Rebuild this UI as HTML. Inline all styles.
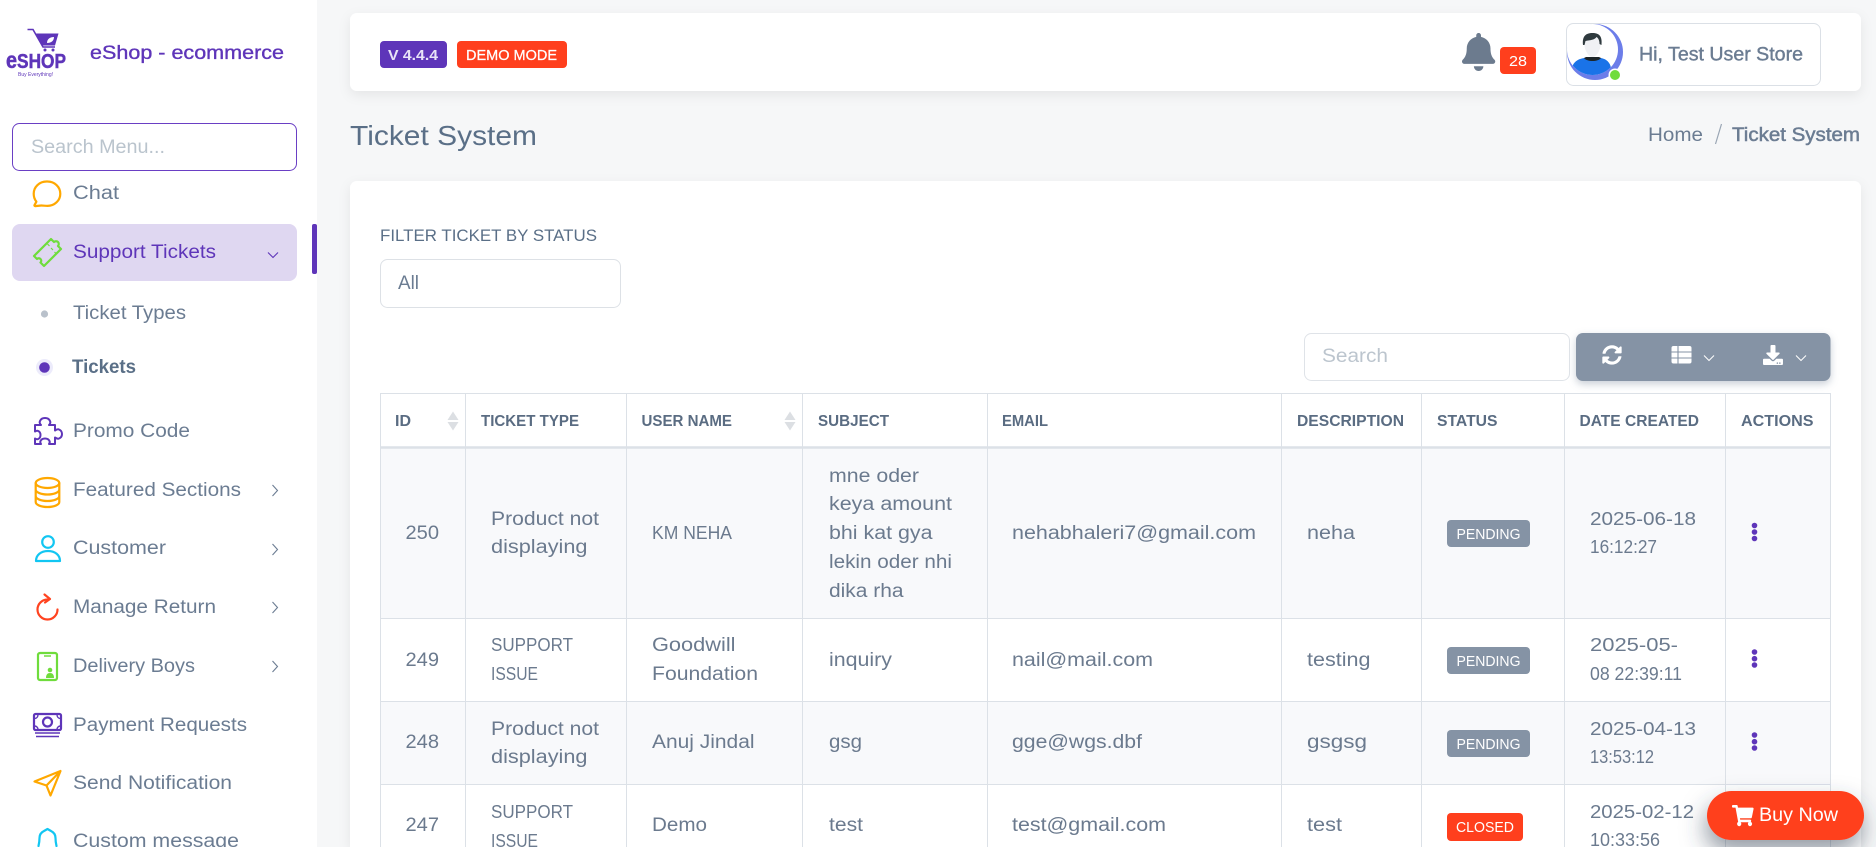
<!DOCTYPE html>
<html lang="en"><head><meta charset="utf-8"><title>Ticket System</title>
<style>
html,body{margin:0;padding:0;width:1876px;height:847px;overflow:hidden;background:#f6f7f8}
svg{display:block;position:absolute;left:0;top:0}
text{font-family:"Liberation Sans",sans-serif;white-space:pre}
.n{font-size:19px;fill:#6b7c92}
.b{font-size:19px;fill:#6b7a8e}
.c{font-size:18px;fill:#6b7a8e}
.h{font-size:16px;font-weight:bold;fill:#5a6c82}
.ic{fill:none;stroke-width:2.2;stroke-linecap:round;stroke-linejoin:round}
.ln{stroke:#dce1e7;stroke-width:1;fill:none}
</style></head><body>
<svg width="1876" height="847" viewBox="0 0 1876 847" xmlns="http://www.w3.org/2000/svg">
<defs>
<filter id="sh" x="-5%" y="-30%" width="110%" height="170%"><feDropShadow dx="0" dy="4" stdDeviation="6" flood-color="#000" flood-opacity=".07"/></filter>
<filter id="sh2" x="-30%" y="-50%" width="160%" height="260%"><feDropShadow dx="-2" dy="12" stdDeviation="12" flood-color="#3a4658" flood-opacity=".55"/></filter>
<filter id="sh3" x="-5%" y="-20%" width="110%" height="160%"><feDropShadow dx="0" dy="3" stdDeviation="4" flood-color="#8593a5" flood-opacity=".45"/></filter>
<clipPath id="av"><circle cx="1592.5" cy="49.5" r="25.5"/></clipPath>
</defs>

<!-- sidebar -->
<rect x="0" y="0" width="317" height="847" fill="#fff"/>
<rect x="312" y="224" width="5" height="50" rx="2" fill="#5e35b9"/>
<!-- logo -->
<path d="M27.5 29.5h5.5l10 17.500h12" fill="none" stroke="#5e35b9" stroke-width="1.6"/>
<path d="M36 33.500h22.500l-3.500 12h-13z" fill="#5e35b9"/>
<path d="M47 43c0-4 3-6 7-6 0 4-3 6-7 6z" fill="#fff"/>
<circle cx="45" cy="50" r="1.500" fill="#5e35b9"/><circle cx="53" cy="50" r="1.500" fill="#5e35b9"/>
<text x="6" y="68" textLength="60" lengthAdjust="spacingAndGlyphs" font-weight="bold" fill="#5e35b9" stroke="#5e35b9" stroke-width=".5"><tspan font-size="23">e</tspan><tspan font-size="20">SHOP</tspan></text>
<text x="18" y="76" textLength="35" lengthAdjust="spacingAndGlyphs" font-size="5" fill="#5e35b9">Buy Everything!</text>
<text x="90" y="59" textLength="194" lengthAdjust="spacingAndGlyphs" font-size="19" fill="#5e35b9" stroke="#5e35b9" stroke-width=".35">eShop - ecommerce</text>

<!-- search menu -->
<rect x="12.5" y="123.5" width="284" height="47" rx="7" fill="#fff" stroke="#6a3fc4" stroke-width="1"/>
<text x="31" y="153" textLength="134" lengthAdjust="spacingAndGlyphs" font-size="19" fill="#bac4cd">Search Menu...</text>

<!-- chat -->
<path class="ic" stroke="#ffa800" d="M47.5 181.5c7 0 12.8 5.4 12.8 12.2s-5.800 12.200-12.800 12.200c-3 0-5 -.6-7.500-.3l-4.800.5c-.8 0-1-.6-.6-1.200l1.800-3.200c-1.800-2.300-2.700-5-2.700-8 0-6.800 5.800-12.200 12.800-12.200z"/>
<text class="n" x="73" y="199" textLength="46" lengthAdjust="spacingAndGlyphs">Chat</text>

<!-- support -->
<rect x="12" y="224" width="285" height="57" rx="8" fill="#dfd7f1"/>
<path class="ic" stroke="#6fdc3c" d="M34 256l17-17 3 3c1-1 3-1 4 0s1 3 0 4l3 3-17 17-3.500-3.500c1-1 1-2.500 0-3.500s-2.500-1-3.500 0z"/>
<path d="M47.500 244l2 2m1.500 2l2 2m1.500 2l1.500 1.500" stroke="#6fdc3c" stroke-width="1.200" fill="none"/>
<text x="73" y="258" textLength="143" lengthAdjust="spacingAndGlyphs" font-size="19" fill="#5e35b9">Support Tickets</text>
<path d="M268 252.500l5 5 5-5" fill="none" stroke="#5e35b9" stroke-width="1.100"/>

<!-- sub -->
<circle cx="44.500" cy="314" r="3.600" fill="#b9c1cb"/>
<text class="n" x="73" y="319" textLength="113" lengthAdjust="spacingAndGlyphs">Ticket Types</text>
<circle cx="44.500" cy="367.500" r="8.500" fill="#ecebfb"/><circle cx="44.500" cy="367.500" r="5.300" fill="#5e35b9"/>
<text x="72" y="373" textLength="64" lengthAdjust="spacingAndGlyphs" font-size="19" font-weight="bold" fill="#5a6f87">Tickets</text>

<!-- promo -->
<path stroke="#5e35b9" fill="none" stroke-width="2" stroke-linejoin="round" d="M35 425h6c-1.500-1.500-1.500-3-1-4 .8-2 3-3 5-3s4.200 1 5 3c.5 1 .5 2.500-1 4h6v5.500c1.500-1 3-1.500 4-1 2 .8 3 2.500 3 4.500s-1 3.700-3 4.500c-1 .5-2.500 0-4-1V444h-6c.7-1 1-2 .5-3-.7-1.500-2.500-2.500-4.500-2.500s-3.800 1-4.500 2.500c-.5 1-.2 2 .5 3H35v-5.500c1.200.7 2.200 1 3.200.5 1.500-.7 2.300-2.300 2.300-4s-.8-3.300-2.300-4c-1-.5-2-.2-3.200.5z"/>
<text class="n" x="73" y="437" textLength="117" lengthAdjust="spacingAndGlyphs">Promo Code</text>

<!-- featured -->
<g class="ic" stroke="#ffa800"><ellipse cx="47.500" cy="483" rx="11.800" ry="5"/><path d="M35.700 483v19c0 2.800 5.300 5 11.800 5s11.800-2.200 11.800-5v-19M35.700 489.500c0 2.800 5.300 5 11.800 5s11.800-2.200 11.800-5M35.700 496c0 2.800 5.300 5 11.800 5s11.800-2.200 11.800-5"/></g>
<text class="n" x="73" y="496" textLength="168" lengthAdjust="spacingAndGlyphs">Featured Sections</text>
<path d="M272.500 485l5 5.500-5 5.500" fill="none" stroke="#6b7c92" stroke-width="1.100"/>

<!-- customer -->
<g class="ic" stroke="#12c6f2"><circle cx="48" cy="542" r="5.800"/><path d="M36 561c0-6 5-10 12-10s12 4 12 10z"/></g>
<text class="n" x="73" y="554" textLength="93" lengthAdjust="spacingAndGlyphs">Customer</text>
<path d="M272.500 544l5 5.500-5 5.500" fill="none" stroke="#6b7c92" stroke-width="1.100"/>

<!-- return -->
<path class="ic" stroke="#ff4320" d="M57.500 609.500A10 10 0 1 1 47.500 599.500M44.500 594.500l5.500 4.500-5 3.500"/>
<text class="n" x="73" y="613" textLength="143" lengthAdjust="spacingAndGlyphs">Manage Return</text>
<path d="M272.500 602l5 5.500-5 5.500" fill="none" stroke="#6b7c92" stroke-width="1.100"/>

<!-- delivery -->
<rect x="38" y="653" width="19" height="27" rx="2" class="ic" stroke="#6fdc3c"/>
<path d="M44 656h7" stroke="#6fdc3c" stroke-width="1.500"/>
<circle cx="50" cy="670" r="2.300" fill="#6fdc3c"/><path d="M46 678c0-3.500 1.500-5 4-5s4 1.500 4 5z" fill="#6fdc3c"/>
<text class="n" x="73" y="672" textLength="122" lengthAdjust="spacingAndGlyphs">Delivery Boys</text>
<path d="M272.500 661l5 5.500-5 5.500" fill="none" stroke="#6b7c92" stroke-width="1.100"/>

<!-- payment -->
<rect x="34" y="714" width="27" height="16" rx="1.500" class="ic" stroke="#5e35b9"/>
<circle cx="47.500" cy="722" r="4.500" class="ic" stroke="#5e35b9"/>
<path d="M34.500 718.500c2 0 3.500-1.500 3.500-4M60.500 718.500c-2 0-3.500-1.500-3.500-4M34.500 726c2 0 3.500 1.500 3.500 3.500M60.500 726c-2 0-3.500 1.500-3.500 3.500" fill="none" stroke="#5e35b9" stroke-width="1.400"/>
<path d="M35 733h25M36 736.500h23" stroke="#5e35b9" stroke-width="1.500"/>
<text class="n" x="73" y="731" textLength="174" lengthAdjust="spacingAndGlyphs">Payment Requests</text>

<!-- send -->
<path class="ic" stroke="#ffa800" d="M60.500 771l-26 10.500 12 4 4 10zM46.500 785.500l14-14.500"/>
<text class="n" x="73" y="789" textLength="159" lengthAdjust="spacingAndGlyphs">Send Notification</text>

<!-- custom -->
<path class="ic" stroke="#12c6f2" d="M38.500 846c.7-3 1-5 1-8 0-4 2.500-6 4.500-7l3.500-2 3.500 2c2 1 4.500 3 4.500 7 0 3 .3 5 1 8"/>
<text class="n" x="73" y="847" textLength="166" lengthAdjust="spacingAndGlyphs">Custom message</text>

<!-- topbar -->
<rect x="350" y="13" width="1511" height="78" rx="7" fill="#fff" filter="url(#sh)"/>
<rect x="380" y="41" width="67" height="27" rx="4" fill="#5e35b9"/>
<text x="388" y="60" textLength="50" lengthAdjust="spacingAndGlyphs" font-size="15" font-weight="bold" fill="#e8e3f7">V 4.4.4</text>
<rect x="457" y="41" width="110" height="27" rx="4" fill="#ff3f1d"/>
<text x="466" y="60" textLength="91" lengthAdjust="spacingAndGlyphs" font-size="15" fill="#fff" stroke="#fff" stroke-width=".25">DEMO MODE</text>

<path transform="translate(1462 33) scale(.0742)" fill="#6c7b8e" d="M224 512c35.32 0 63.97-28.65 63.97-64H160.030c0 35.35 28.65 64 63.97 64zm215.39-149.71c-19.32-20.76-55.47-51.990-55.47-154.290 0-77.700-54.480-139.900-127.940-155.160V32c0-17.670-14.320-32-31.980-32s-31.980 14.330-31.980 32v20.840C118.560 68.100 64.080 130.300 64.080 208c0 102.300-36.150 133.530-55.470 154.290-6 6.450-8.660 14.160-8.610 21.710.11 16.400 12.980 32 32.100 32h383.800c19.120 0 32-15.600 32.100-32 .05-7.550-2.610-15.270-8.610-21.710z"/>
<rect x="1500" y="47" width="36" height="27" rx="4" fill="#ff3f1d"/>
<text x="1509" y="66" textLength="18" lengthAdjust="spacingAndGlyphs" font-size="15" fill="#fff">28</text>

<rect x="1566.500" y="23.500" width="254" height="62" rx="7" fill="#fff" stroke="#dbe0e6" stroke-width="1"/>
<circle cx="1595" cy="52" r="28" fill="#6c7de9"/>
<circle cx="1592.500" cy="49.500" r="25.500" fill="#fff"/>
<g clip-path="url(#av)">
<path d="M1572 80v-12c1-6 6-9 12-10h17c5 1 9 4 10 10v12z" fill="#1a73e8"/>
<path d="M1584 58c3 4 14 4 17 0l-2-1h-13z" fill="#1d2528"/>
<path d="M1584 42c0-6 3-8 8.500-8s8.500 2 8.500 8c0 7-4 15-8.500 15s-8.500-8-8.500-15z" fill="#f0f1f4"/>
<path d="M1583 45c-1-9 3-12 9.500-12s10 3 9 12l-2-1c0-3-1-6-3-7-2 3-6 3-11 4l-1 4z" fill="#2f3a3e"/>
</g>
<circle cx="1615" cy="75" r="6.500" fill="#fff"/><circle cx="1615" cy="75" r="5" fill="#6fdc3c"/>
<text x="1639" y="60.500" textLength="164" lengthAdjust="spacingAndGlyphs" font-size="19" fill="#6b7c92" stroke="#6b7c92" stroke-width=".4">Hi, Test User Store</text>

<!-- title -->
<text x="350" y="145" textLength="187" lengthAdjust="spacingAndGlyphs" font-size="28" fill="#5a6f87">Ticket System</text>
<text x="1648" y="141" textLength="55" lengthAdjust="spacingAndGlyphs" font-size="19" fill="#6b7c92">Home</text>
<path d="M1721.500 124l-6 20" stroke="#9aa6b4" stroke-width="1.200"/>
<text x="1732" y="141" textLength="128" lengthAdjust="spacingAndGlyphs" font-size="19" fill="#6b7c92" stroke="#6b7c92" stroke-width=".5">Ticket System</text>

<!-- card -->
<path d="M350 847V188a7 7 0 0 1 7-7H1854a7 7 0 0 1 7 7V847z" fill="#fff" filter="url(#sh)"/>
<text x="380" y="241" textLength="217" lengthAdjust="spacingAndGlyphs" font-size="17" fill="#5a6f87">FILTER TICKET BY STATUS</text>
<rect x="380.500" y="259.500" width="240" height="48" rx="7" fill="#fff" stroke="#dde1e6" stroke-width="1"/>
<text x="398" y="289" textLength="21" lengthAdjust="spacingAndGlyphs" font-size="19" fill="#6b7c92">All</text>

<rect x="1304.500" y="333.500" width="265" height="47" rx="7" fill="#fff" stroke="#dfe3e8" stroke-width="1"/>
<text x="1322" y="362" textLength="66" lengthAdjust="spacingAndGlyphs" font-size="19" fill="#bcc5ce">Search</text>
<rect x="1576" y="333" width="254.500" height="48" rx="7" fill="#8593a5" filter="url(#sh3)"/>
<path transform="translate(1602 345) scale(.039)" fill="#fff" d="M370.720 133.280C339.458 104.008 298.888 87.962 255.848 88c-77.458.068-144.328 53.178-162.791 126.850-1.344 5.363-6.122 9.150-11.651 9.150H24.103c-7.498 0-13.194-6.807-11.807-14.176C33.933 94.924 134.813 8 256 8c66.448 0 126.791 26.136 171.315 68.685L463.030 40.970C478.149 25.851 504 36.559 504 57.941V192c0 13.255-10.745 24-24 24H345.941c-21.382 0-32.090-25.851-16.971-40.971l41.750-41.749zM32 296h134.059c21.382 0 32.090 25.851 16.971 40.971l-41.750 41.750c31.262 29.273 71.835 45.319 114.876 45.280 77.418-.07 144.315-53.144 162.787-126.849 1.344-5.363 6.122-9.150 11.651-9.150h57.304c7.498 0 13.194 6.807 11.807 14.176C478.067 417.076 377.187 504 256 504c-66.448 0-126.791-26.136-171.315-68.685L48.970 471.030C33.851 486.149 8 475.441 8 454.059V320c0-13.255 10.745-24 24-24z"/>
<rect x="1671.500" y="346" width="20" height="17.500" rx="2" fill="#fff"/>
<path d="M1671 352h21M1671 358h21M1678 346v18" stroke="#8593a5" stroke-width="1.100"/>
<path d="M1704 355.500l5 5 5-5" fill="none" stroke="#fff" stroke-width="1"/>
<path transform="translate(1763 345) scale(.039)" fill="#fff" d="M216 0h80c13.300 0 24 10.700 24 24v168h87.700c17.800 0 26.700 21.500 14.100 34.100L269.700 378.300c-7.500 7.500-19.800 7.500-27.300 0L90.100 226.100c-12.600-12.600-3.700-34.100 14.100-34.100H192V24c0-13.300 10.700-24 24-24zm296 376v112c0 13.300-10.700 24-24 24H24c-13.300 0-24-10.700-24-24V376c0-13.300 10.700-24 24-24h146.700l49 49c20.100 20.100 52.500 20.100 72.600 0l49-49H488c13.300 0 24 10.700 24 24zm-124 88c0-11-9-20-20-20s-20 9-20 20 9 20 20 20 20-9 20-20zm64 0c0-11-9-20-20-20s-20 9-20 20 9 20 20 20 20-9 20-20z"/>
<path d="M1796 355.500l5 5 5-5" fill="none" stroke="#fff" stroke-width="1"/>

<!-- table -->
<rect x="380" y="448" width="1450" height="170" fill="#f8f9fb"/>
<rect x="380" y="701" width="1450" height="83" fill="#f8f9fb"/>
<path class="ln" d="M380 393.500H1830M380 618.500H1830M380 701.500H1830M380 784.500H1830M380.500 393V847M465.500 393V847M626.500 393V847M802.500 393V847M987.500 393V847M1281.500 393V847M1421.500 393V847M1564.500 393V847M1725.500 393V847M1830.500 393V847"/>
<path d="M380 447.500H1830" stroke="#dce1e7" stroke-width="2.500"/>

<text class="h" x="395" y="426" textLength="16" lengthAdjust="spacingAndGlyphs">ID</text>
<path d="M453 411.500l5.500 8.500h-11zM453 430.500l5.500-8.500h-11z" fill="#dcdfe3"/>
<text class="h" x="481" y="426" textLength="98" lengthAdjust="spacingAndGlyphs">TICKET TYPE</text>
<text class="h" x="641.500" y="426" textLength="90.500" lengthAdjust="spacingAndGlyphs">USER NAME</text>
<path d="M790 411.500l5.500 8.500h-11zM790 430.500l5.500-8.500h-11z" fill="#dcdfe3"/>
<text class="h" x="818" y="426" textLength="71" lengthAdjust="spacingAndGlyphs">SUBJECT</text>
<text class="h" x="1002" y="426" textLength="46" lengthAdjust="spacingAndGlyphs">EMAIL</text>
<text class="h" x="1297" y="426" textLength="107" lengthAdjust="spacingAndGlyphs">DESCRIPTION</text>
<text class="h" x="1437" y="426" textLength="60.500" lengthAdjust="spacingAndGlyphs">STATUS</text>
<text class="h" x="1579.500" y="426" textLength="119.500" lengthAdjust="spacingAndGlyphs">DATE CREATED</text>
<text class="h" x="1741" y="426" textLength="72.500" lengthAdjust="spacingAndGlyphs">ACTIONS</text>

<!-- row 1 -->
<text class="b" x="405.500" y="539" textLength="33.500" lengthAdjust="spacingAndGlyphs">250</text>
<text class="b" x="491" y="525" textLength="108" lengthAdjust="spacingAndGlyphs">Product not</text>
<text class="b" x="491" y="553" textLength="96.500" lengthAdjust="spacingAndGlyphs">displaying</text>
<text class="c" x="652" y="539" textLength="80" lengthAdjust="spacingAndGlyphs">KM NEHA</text>
<text class="b" x="829" y="482" textLength="90" lengthAdjust="spacingAndGlyphs">mne oder</text>
<text class="b" x="829" y="510" textLength="123" lengthAdjust="spacingAndGlyphs">keya amount</text>
<text class="b" x="829" y="539" textLength="103.500" lengthAdjust="spacingAndGlyphs">bhi kat gya</text>
<text class="b" x="829" y="568" textLength="123" lengthAdjust="spacingAndGlyphs">lekin oder nhi</text>
<text class="b" x="829" y="597" textLength="74.500" lengthAdjust="spacingAndGlyphs">dika rha</text>
<text class="b" x="1012" y="539" textLength="244" lengthAdjust="spacingAndGlyphs">nehabhaleri7@gmail.com</text>
<text class="b" x="1307" y="539" textLength="48" lengthAdjust="spacingAndGlyphs">neha</text>
<rect x="1447" y="520" width="83" height="27" rx="4" fill="#8593a5"/>
<text x="1456.500" y="539" textLength="64" lengthAdjust="spacingAndGlyphs" font-size="15" fill="#fff">PENDING</text>
<text class="c" x="1590" y="525" textLength="106" lengthAdjust="spacingAndGlyphs">2025-06-18</text>
<text class="c" x="1590" y="553" textLength="67" lengthAdjust="spacingAndGlyphs">16:12:27</text>
<g fill="#5e35b9"><circle cx="1754.500" cy="525.500" r="2.800"/><circle cx="1754.500" cy="532" r="2.800"/><circle cx="1754.500" cy="538.500" r="2.800"/></g>

<!-- row 2 -->
<text class="b" x="405.500" y="666" textLength="33.500" lengthAdjust="spacingAndGlyphs">249</text>
<text class="c" x="491" y="651" textLength="82" lengthAdjust="spacingAndGlyphs">SUPPORT</text>
<text class="c" x="491" y="680" textLength="47" lengthAdjust="spacingAndGlyphs">ISSUE</text>
<text class="b" x="652" y="651" textLength="83.500" lengthAdjust="spacingAndGlyphs">Goodwill</text>
<text class="b" x="652" y="680" textLength="106" lengthAdjust="spacingAndGlyphs">Foundation</text>
<text class="b" x="829" y="666" textLength="63" lengthAdjust="spacingAndGlyphs">inquiry</text>
<text class="b" x="1012" y="666" textLength="141" lengthAdjust="spacingAndGlyphs">nail@mail.com</text>
<text class="b" x="1307" y="666" textLength="63.500" lengthAdjust="spacingAndGlyphs">testing</text>
<rect x="1447" y="647" width="83" height="27" rx="4" fill="#8593a5"/>
<text x="1456.500" y="666" textLength="64" lengthAdjust="spacingAndGlyphs" font-size="15" fill="#fff">PENDING</text>
<text class="c" x="1590" y="651" textLength="88" lengthAdjust="spacingAndGlyphs">2025-05-</text>
<text class="c" x="1590" y="680" textLength="92" lengthAdjust="spacingAndGlyphs">08 22:39:11</text>
<g fill="#5e35b9"><circle cx="1754.500" cy="652" r="2.800"/><circle cx="1754.500" cy="658.700" r="2.800"/><circle cx="1754.500" cy="665" r="2.800"/></g>

<!-- row 3 -->
<text class="b" x="405.500" y="748" textLength="33.500" lengthAdjust="spacingAndGlyphs">248</text>
<text class="b" x="491" y="735" textLength="108" lengthAdjust="spacingAndGlyphs">Product not</text>
<text class="b" x="491" y="763" textLength="96.500" lengthAdjust="spacingAndGlyphs">displaying</text>
<text class="b" x="652" y="748" textLength="102.500" lengthAdjust="spacingAndGlyphs">Anuj Jindal</text>
<text class="b" x="829" y="748" textLength="33" lengthAdjust="spacingAndGlyphs">gsg</text>
<text class="b" x="1012" y="748" textLength="130" lengthAdjust="spacingAndGlyphs">gge@wgs.dbf</text>
<text class="b" x="1307" y="748" textLength="60" lengthAdjust="spacingAndGlyphs">gsgsg</text>
<rect x="1447" y="730" width="83" height="27" rx="4" fill="#8593a5"/>
<text x="1456.500" y="749" textLength="64" lengthAdjust="spacingAndGlyphs" font-size="15" fill="#fff">PENDING</text>
<text class="c" x="1590" y="735" textLength="106" lengthAdjust="spacingAndGlyphs">2025-04-13</text>
<text class="c" x="1590" y="763" textLength="64" lengthAdjust="spacingAndGlyphs">13:53:12</text>
<g fill="#5e35b9"><circle cx="1754.500" cy="735" r="2.800"/><circle cx="1754.500" cy="741.700" r="2.800"/><circle cx="1754.500" cy="748" r="2.800"/></g>

<!-- row 4 -->
<text class="b" x="405.500" y="831" textLength="33.500" lengthAdjust="spacingAndGlyphs">247</text>
<text class="c" x="491" y="818" textLength="82" lengthAdjust="spacingAndGlyphs">SUPPORT</text>
<text class="c" x="491" y="847" textLength="47" lengthAdjust="spacingAndGlyphs">ISSUE</text>
<text class="b" x="652" y="831" textLength="55" lengthAdjust="spacingAndGlyphs">Demo</text>
<text class="b" x="829" y="831" textLength="34" lengthAdjust="spacingAndGlyphs">test</text>
<text class="b" x="1012" y="831" textLength="154" lengthAdjust="spacingAndGlyphs">test@gmail.com</text>
<text class="b" x="1307" y="831" textLength="35" lengthAdjust="spacingAndGlyphs">test</text>
<rect x="1447" y="813" width="76" height="28" rx="4" fill="#ff3f1d"/>
<text x="1456" y="832" textLength="58" lengthAdjust="spacingAndGlyphs" font-size="15" fill="#fff">CLOSED</text>
<text class="c" x="1590" y="818" textLength="104" lengthAdjust="spacingAndGlyphs">2025-02-12</text>
<text class="c" x="1590" y="846" textLength="70" lengthAdjust="spacingAndGlyphs">10:33:56</text>

<!-- buy now -->
<rect x="1707" y="791" width="157" height="49" rx="24.500" fill="#ff3f1d" filter="url(#sh2)"/>
<path transform="translate(1732 805) scale(.0375 .0415)" fill="#fff" d="M528.120 301.319l47.273-208C578.806 78.301 567.391 64 551.990 64H159.208l-9.166-44.810C147.758 8.021 137.930 0 126.529 0H24C10.745 0 0 10.745 0 24v16c0 13.255 10.745 24 24 24h69.883l70.248 343.435C147.325 417.100 136 435.222 136 456c0 30.928 25.072 56 56 56s56-25.072 56-56c0-15.674-6.447-29.835-16.824-40h209.647C430.447 426.165 424 440.326 424 456c0 30.928 25.072 56 56 56s56-25.072 56-56c0-22.172-12.888-41.332-31.579-50.405l5.517-24.276c3.413-15.018-8.002-29.319-23.403-29.319H218.117l-6.545-32h293.145c11.206 0 20.920-7.754 23.403-18.681z"/>
<text x="1759" y="821" textLength="79" lengthAdjust="spacingAndGlyphs" font-size="19.500" fill="#fff">Buy Now</text>
</svg>
</body></html>
